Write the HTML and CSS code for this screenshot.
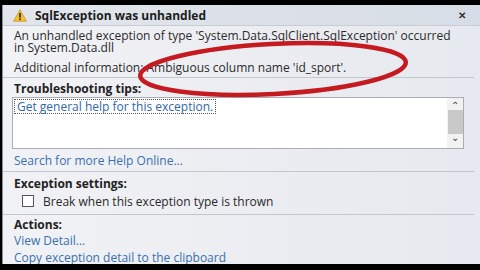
FILE: index.html
```html
<!DOCTYPE html>
<html lang="en">
<head>
    <meta charset="UTF-8">
    <title>SqlException was unhandled</title>
    <link rel="stylesheet" href="styles.css">
</head>
<body>
    <div class="dialog">
        <div class="titlebar">
            <svg class="warn" width="14" height="13" viewBox="0 0 14 13">
                <path d="M7 0.8 L13.4 12.2 L0.6 12.2 Z" fill="#f6c432" stroke="#c9922a" stroke-width="0.8" stroke-linejoin="round"/>
                <rect x="6.2" y="4" width="1.6" height="4.6" fill="#222"/>
                <rect x="6.2" y="9.5" width="1.6" height="1.6" fill="#222"/>
            </svg>
            <span class="title">SqlException was unhandled</span>
            <span class="close">&#x2715;</span>
        </div>

        <div class="section message">
            <p>An unhandled exception of type 'System.Data.SqlClient.SqlException' occurred<br>in System.Data.dll</p>
            <p class="extra">Additional information: Ambiguous column name 'id_sport'.</p>
        </div>

        <div class="section tips">
            <h3>Troubleshooting tips:</h3>
            <div class="tipbox">
                <a class="tiplink">Get general help for this exception.</a>
                <div class="scroll">
                    <span class="arrow">&#x2303;</span>
                    <span class="thumb"></span>
                    <span class="arrow down">&#x2304;</span>
                </div>
            </div>
            <a class="link search">Search for more Help Online...</a>
        </div>

        <div class="section settings">
            <h3>Exception settings:</h3>
            <label class="check"><span class="box"></span>Break when this exception type is thrown</label>
        </div>

        <div class="section actions">
            <h3>Actions:</h3>
            <a class="link">View Detail...</a>
            <a class="link">Copy exception detail to the clipboard</a>
        </div>

        <svg class="annotation" width="480" height="270" viewBox="0 0 480 270">
            <ellipse cx="273" cy="69" rx="133" ry="25" transform="rotate(-3 273 69)" fill="none" stroke="#c41a20" stroke-width="4.5"/>
        </svg>
    </div>
</body>
</html>
```

FILE: styles.css
```css
body {
    margin: 0;
    background-color: #000;
    font-family: "Open Sans", "Noto Sans", sans-serif;
    font-size: 12px;
    color: #2a2a2a;
}
.dialog {
    position: relative;
    margin: 5px 0 0 2px;
    height: 259px;
    background: linear-gradient(90deg, #f1f2f5, #e6e9ef);
    border-left: 1px solid #8a8f98;
    overflow: hidden;
}
.titlebar {
    display: flex;
    align-items: center;
    height: 20px;
    padding: 0 10px;
    background: linear-gradient(90deg, #e2e6ec, #d7dde6);
    border-bottom: 1px solid #c8ccd4;
}
.warn {
    margin-right: 8px;
}
.title {
    flex: 1;
    font-weight: bold;
    color: #1c1c1c;
}
.close {
    font-size: 10px;
    font-weight: bold;
    color: #333;
    margin-right: 4px;
}
.section {
    padding: 0 10px 0 11px;
    margin-right: 6px;
    border-bottom: 1px solid #c2c6cd;
}
p {
    margin: 0;
    line-height: 12px;
}
.message {
    padding: 4px 10px 3px 11px;
}
.message .extra {
    margin-top: 8px;
}
h3 {
    margin: 0;
    font-size: 12px;
    font-weight: bold;
    line-height: 14px;
    color: #222;
}
.tips {
    padding-top: 4px;
    padding-bottom: 3px;
}
.tipbox {
    display: flex;
    justify-content: space-between;
    height: 50px;
    margin: 1px 0 0 -2px;
    background-color: #fff;
    border: 1px solid #a9adb4;
}
.tiplink {
    align-self: flex-start;
    margin: 1px 0 0 1px;
    padding: 0 2px;
    color: #2f68a8;
    border: 1px dotted #555;
    line-height: 13px;
}
.scroll {
    display: flex;
    flex-direction: column;
    align-items: center;
    width: 16px;
    background-color: #f2f2f2;
}
.arrow {
    height: 12px;
    line-height: 14px;
    font-size: 10px;
    color: #444;
}
.arrow.down {
    line-height: 6px;
}
.thumb {
    width: 15px;
    height: 24px;
    background-color: #c9c9c9;
}
.link {
    display: block;
    color: #3a70ad;
    line-height: 17px;
}
.search {
    margin-top: 4px;
    line-height: 15px;
}
.settings {
    padding-top: 5px;
    padding-bottom: 3px;
}
.check {
    display: flex;
    align-items: center;
    height: 20px;
    margin-left: 8px;
}
.box {
    width: 10px;
    height: 10px;
    margin-right: 9px;
    background-color: #fff;
    border: 1px solid #555;
}
.actions {
    padding-top: 3px;
    border-bottom: none;
}
.annotation {
    position: absolute;
    top: -5px;
    left: -3px;
    pointer-events: none;
}
```
